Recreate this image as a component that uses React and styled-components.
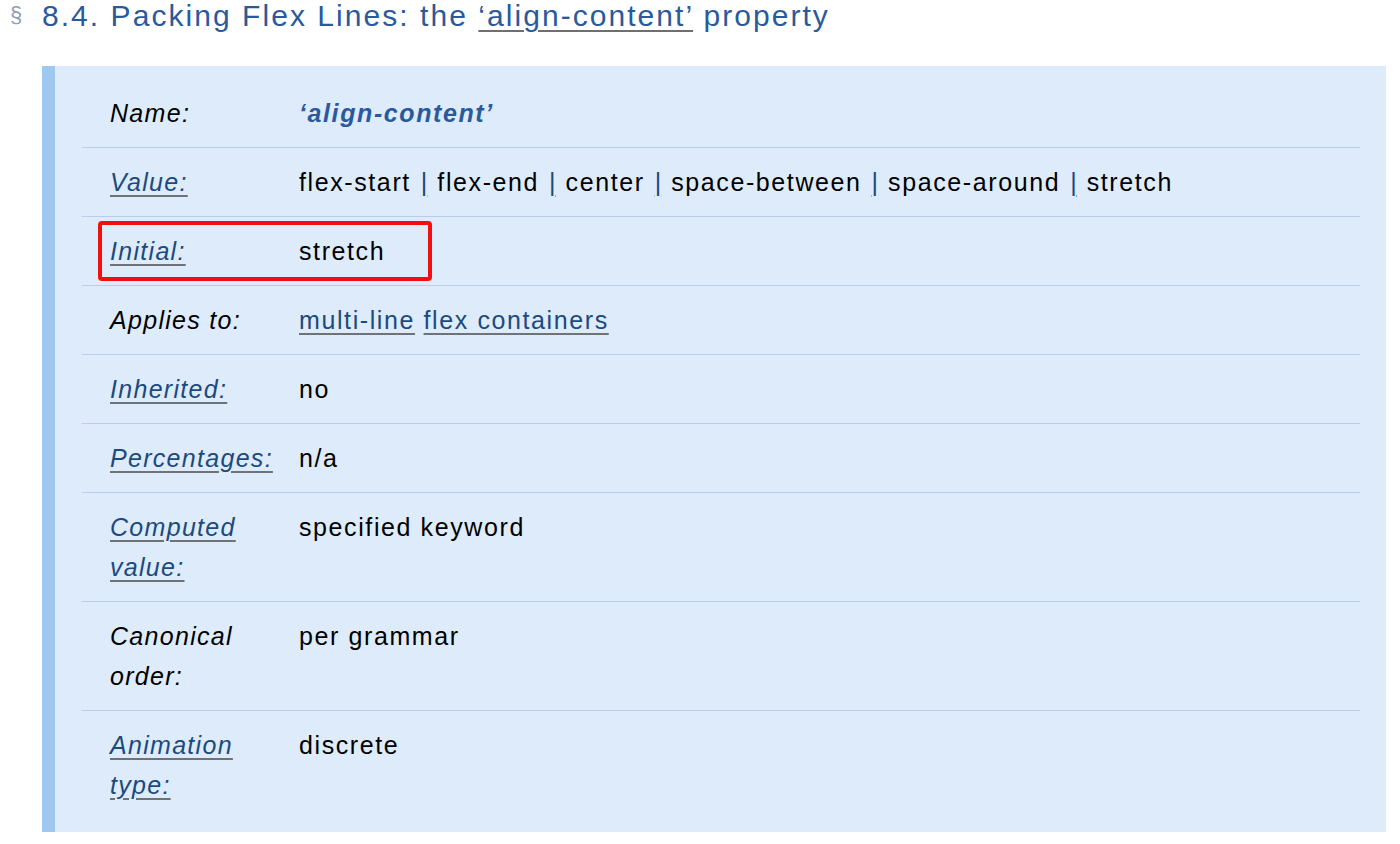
import styled, { createGlobalStyle } from 'styled-components';

const GlobalStyle = createGlobalStyle`
  html, body {
    margin: 0;
    padding: 0;
    background: #ffffff;
  }
  body {
    font-family: "Liberation Sans", Arial, sans-serif;
    color: #000000;
  }
`;

const Page = styled.div`
  width: 1400px;
  height: 844px;
  overflow: hidden;
`;

const Heading = styled.h3`
  margin: 0;
  padding: 0 0 0 10px;
  height: 66px;
  display: flex;
  align-items: flex-start;
  font-size: 30px;
  line-height: 32px;
  letter-spacing: 2.05px;
  font-weight: 400;
  color: #2a5a9b;
`;

const Section = styled.span`
  width: 32px;
  font-size: 22px;
  line-height: 30px;
  letter-spacing: 0;
  color: #8d9db3;
`;

const Quoted = styled.span`
  text-decoration: underline;
  text-decoration-color: #6f6f6f;
  text-decoration-thickness: 2px;
  text-underline-offset: 4px;
`;

const DefBox = styled.div`
  margin: 0 14px 0 42px;
  padding: 13px 26px 13px 27px;
  background: #deebfb;
  border-left: 13px solid #9fc8ef;
`;

const Table = styled.div`
  display: flex;
  flex-direction: column;
`;

const Row = styled.div`
  position: relative;
  display: grid;
  grid-template-columns: 217px 1fr;
  padding: 14px 0 14px;
  font-size: 25px;
  line-height: 40px;
  letter-spacing: 1.6px;
  & + & {
    border-top: 1px solid #b9cde4;
  }
`;

const Label = styled.div`
  padding-left: 28px;
  font-style: italic;
  letter-spacing: 1.3px;
`;

const Value = styled.div`
  white-space: nowrap;
`;

const Link = styled.a`
  color: #1b4a7e;
  text-decoration: underline;
  text-decoration-color: #6f7378;
  text-decoration-thickness: 2px;
  text-underline-offset: 4px;
`;

const PropName = styled.span`
  color: #2a5a9b;
  font-style: italic;
  font-weight: 700;
`;

const Bar = styled(Link)`
  margin: 0 10px;
  letter-spacing: 0;
`;

const Highlight = styled.div`
  position: absolute;
  left: 16px;
  top: 4px;
  width: 334px;
  height: 60px;
  box-sizing: border-box;
  border: 4px solid #f01010;
  border-radius: 4px;
  pointer-events: none;
`;

const values = ['flex-start', 'flex-end', 'center', 'space-between', 'space-around', 'stretch'];

const rows = [
  { label: 'Name:', value: <PropName>‘align-content’</PropName> },
  {
    label: 'Value:',
    link: true,
    value: values.map((v, i) => (
      <span key={v}>
        {i > 0 && <Bar>|</Bar>}
        {v}
      </span>
    )),
  },
  { label: 'Initial:', link: true, value: 'stretch', marked: true },
  {
    label: 'Applies to:',
    value: (
      <>
        <Link>multi-line</Link> <Link>flex containers</Link>
      </>
    ),
  },
  { label: 'Inherited:', link: true, value: 'no' },
  { label: 'Percentages:', link: true, value: 'n/a' },
  { label: ['Computed', 'value:'], link: true, value: 'specified keyword' },
  { label: ['Canonical', 'order:'], value: 'per grammar' },
  { label: ['Animation', 'type:'], link: true, value: 'discrete' },
];

const LabelText = ({ label, link }) => {
  const lines = Array.isArray(label) ? label : [label];
  return lines.map((l, i) => (
    <div key={i}>{link ? <Link>{l}</Link> : l}</div>
  ));
};

const App = () => (
  <Page>
    <GlobalStyle />
    <Heading>
      <Section>§</Section>
      <span>
        8.4. Packing Flex Lines: the <Quoted>‘align-content’</Quoted> property
      </span>
    </Heading>
    <DefBox>
      <Table>
        {rows.map((r, i) => (
          <Row key={i}>
            <Label>
              <LabelText label={r.label} link={r.link} />
            </Label>
            <Value>{r.value}</Value>
            {r.marked && <Highlight />}
          </Row>
        ))}
      </Table>
    </DefBox>
  </Page>
);

export default App;
